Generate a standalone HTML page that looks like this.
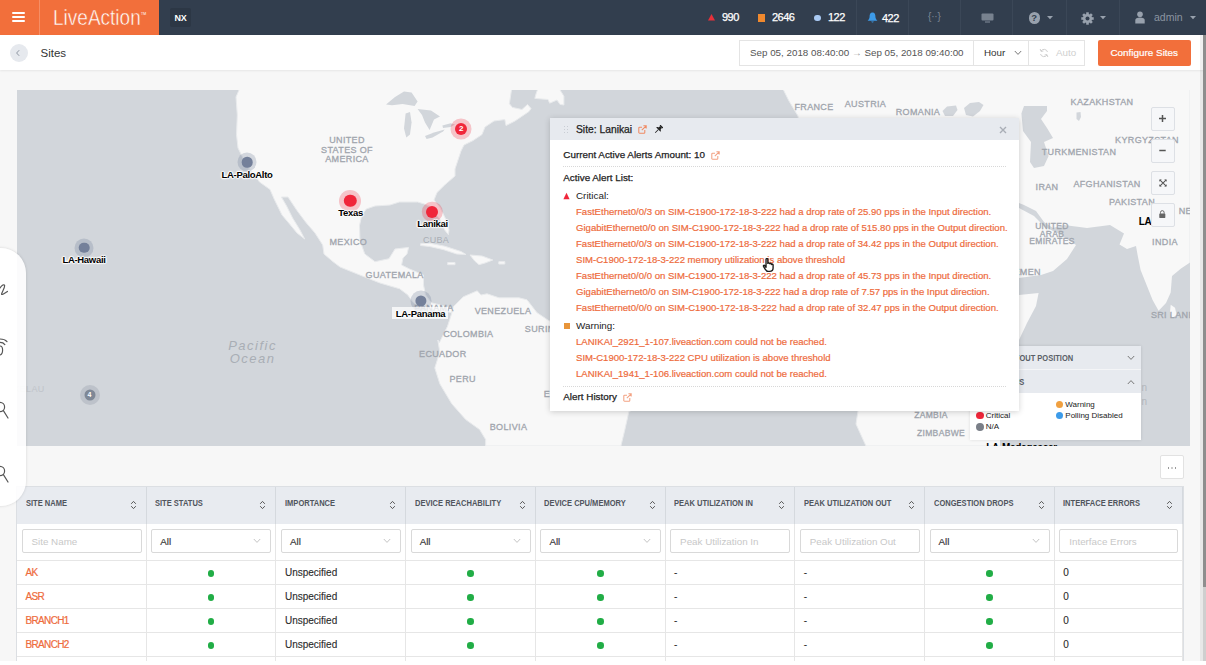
<!DOCTYPE html>
<html><head><meta charset="utf-8">
<style>
*{box-sizing:border-box;margin:0;padding:0}
html,body{width:1206px;height:665px;overflow:hidden;background:#fff;font-family:"Liberation Sans",sans-serif;}
#app{position:absolute;left:0;top:0;width:1206px;height:661px;background:#f7f7f7;overflow:hidden}
.abs{position:absolute}
/* top bar */
#top{position:absolute;left:0;top:0;width:1206px;height:35px;background:#323e4e}
#brand{position:absolute;left:0;top:0;width:159px;height:35px;background:#f26f3b}
#brand .div{position:absolute;left:39px;top:0;width:1px;height:35px;background:#f58e65}
.hb{position:absolute;left:12px;width:13px;height:2px;background:#fff;border-radius:1px}
#logo{position:absolute;left:52.5px;top:4.5px;font-size:22.5px;color:#fff;line-height:26px;font-weight:400;transform-origin:left center;transform:scaleX(.845);-webkit-text-stroke:.5px #f26f3b}
#nx{position:absolute;left:170px;top:8px;width:21px;height:19px;background:#2c3745;border-radius:2px;color:#fff;font-size:9px;letter-spacing:-.3px;font-weight:700;text-align:center;line-height:20.5px}
.tsep{position:absolute;top:0;width:1px;height:35px;background:#3b4757}
.tnum{position:absolute;top:11px;font-size:11px;color:#fff;line-height:13px;letter-spacing:-.55px;-webkit-text-stroke:.25px #fff}
/* sub bar */
#sub{position:absolute;left:0;top:35px;width:1206px;height:35px;background:#fff;box-shadow:0 1px 2px rgba(0,0,0,.07)}
#back{position:absolute;left:10px;top:9px;width:18px;height:18px;border-radius:9px;background:#e6e9ee}
#sites{position:absolute;left:40.5px;top:10px;font-size:11.5px;color:#333;line-height:16px}
.box{position:absolute;top:5px;height:26px;border:1px solid #e4e4e4;background:#fff;font-size:9.8px;color:#555;line-height:24px;white-space:nowrap}
#cfg{position:absolute;left:1097.5px;top:5px;width:93.5px;height:26px;background:#f26f3b;color:#fff;-webkit-text-stroke:.2px #fff;font-size:9.9px;text-align:center;line-height:26px;border-radius:2px}
/* map */
#map{position:absolute;left:17px;top:89.5px;width:1173px;height:356.5px;background:#d2d6db;overflow:hidden}
.cl{position:absolute;font-size:9px;letter-spacing:.35px;color:#a0a5ad;-webkit-text-stroke:.3px #a0a5ad;font-weight:400;white-space:nowrap;transform:translate(-50%,-50%);line-height:9.5px;text-align:center}
.mk{position:absolute;border-radius:50%;transform:translate(-50%,-50%)}
.ml{position:absolute;font-size:9.5px;font-weight:700;color:#000;white-space:nowrap;transform:translate(-50%,-50%);line-height:11px;text-shadow:0 0 2px #fff,0 0 2px #fff,0 0 3px #fff,1px 0 1px #fff,-1px 0 1px #fff,0 1px 1px #fff,0 -1px 1px #fff;letter-spacing:-.3px}
.ctl{position:absolute;left:1133.5px;width:24px;height:24px;background:#f6f7f9;border:1px solid #dde0e5;border-radius:2px}
/* popup */
#pop{position:absolute;left:550px;top:118px;width:469px;height:293px;background:#fff;box-shadow:0 1px 6px rgba(0,0,0,.18)}
#poph{position:absolute;left:0;top:0;width:469px;height:22px;background:#e7eaef}
.pt{position:absolute;font-size:9.85px;color:#222;white-space:nowrap;line-height:12px;-webkit-text-stroke:.25px #222}
.al{position:absolute;left:26px;font-size:9.57px;color:#ee6b3c;white-space:nowrap;line-height:12px;-webkit-text-stroke:.2px #ee6b3c}
.dot{position:absolute;left:13px;width:443px;height:0;border-top:1px dotted #d8d8d8}
/* legend */
#leg{position:absolute;left:970px;top:346px;width:171px;height:94px;background:#fff;box-shadow:0 0 3px rgba(0,0,0,.12)}
.lg{position:absolute;font-size:8px;color:#222;white-space:nowrap;line-height:10px}
.ld{position:absolute;width:7.8px;height:7.8px;border-radius:50%}
/* table */
#tbl{position:absolute;left:16px;top:486.3px;width:1168px;height:180px;background:#fff;border:1px solid #dcdfe3}
.th{position:absolute;top:0;height:36.7px;background:#e8ebf0;border-right:1px solid #d5d9de;font-size:9.6px;font-weight:700;color:#50555d;line-height:32.5px;padding-left:8.5px;white-space:nowrap}
.tht{display:inline-block;transform-origin:left center;transform:scaleX(.785)}
.fc{position:absolute;top:36.7px;height:37px;border-right:1px solid #e6e6e6;border-bottom:1px solid #e6e6e6}
.in{position:absolute;left:4.5px;top:4.7px;right:4px;height:24.3px;border:1px solid #d9d9d9;border-radius:2px;font-size:9.8px;line-height:23.5px;padding-left:9px;color:#c8c8c8;white-space:nowrap}
.in.sel{color:#333;padding-left:8px;-webkit-text-stroke:.15px #333}
.td{position:absolute;height:24px;border-right:1px solid #e6e6e6;border-bottom:1px solid #e6e6e6;font-size:10px;line-height:23px;padding-left:8.5px;color:#2c2c2c;white-space:nowrap;-webkit-text-stroke:.12px #2c2c2c}
.nm{color:#ee6b3c;letter-spacing:-.65px;-webkit-text-stroke:.2px #ee6b3c}
.gd{position:absolute;width:6.4px;height:6.4px;border-radius:50%;background:#21ad46;top:9.3px;left:61.3px}
.so{position:absolute;right:9px;top:13px;width:7px;height:10px}
</style></head><body>
<div id="app">
 <div id="top">
  <div id="brand">
    <div class="hb" style="top:12px"></div><div class="hb" style="top:16px"></div><div class="hb" style="top:20px"></div>
    <div class="div"></div>
    <div id="logo">LiveAction</div><div class="abs" style="left:141px;top:12px;font-size:3.5px;color:#fff;line-height:4px;letter-spacing:.1px">TM</div>
  </div>
  <div id="nx">NX</div>
  <div class="tsep" style="left:856px"></div><div class="tsep" style="left:908px"></div><div class="tsep" style="left:960px"></div><div class="tsep" style="left:1012px"></div><div class="tsep" style="left:1066px"></div><div class="tsep" style="left:1119px"></div><svg class="abs" style="left:707px;top:13px" width="9" height="9" viewBox="0 0 9 9"><path d="M4.5 1 L8 7.5 L1 7.5 Z" fill="#e8303a"/></svg><div class="tnum" style="left:722px">990</div><div class="abs" style="left:757.5px;top:14px;width:7px;height:7.5px;background:#f0892e"></div><div class="tnum" style="left:772px">2646</div><div class="abs" style="left:814.4px;top:14.6px;width:6.4px;height:6.4px;border-radius:50%;background:#a9c9f2"></div><div class="tnum" style="left:828px">122</div><svg class="abs" style="left:867px;top:11.5px" width="11" height="12" viewBox="0 0 11 12"><path d="M5.5 0.6 C3.2 0.6 2.6 2.8 2.6 4.6 C2.6 6.8 1.6 7.8 0.6 8.8 L10.4 8.8 C9.4 7.8 8.4 6.8 8.4 4.6 C8.4 2.8 7.8 0.6 5.5 0.6 Z M4.2 9.6 A1.4 1.4 0 0 0 6.8 9.6 Z" fill="#3d9be9"/></svg><div class="tnum" style="left:882px;top:12px">422</div><div class="abs" style="left:928px;top:10px;font-size:10px;color:#7c8693;letter-spacing:-.2px;line-height:14px">{··}</div><svg class="abs" style="left:981px;top:13px" width="13" height="10" viewBox="0 0 13 10"><rect x="0.5" y="0.5" width="12" height="7" rx="1" fill="#78828f"/><rect x="4" y="8.4" width="5" height="1.2" fill="#78828f"/></svg><div class="abs" style="left:1028.5px;top:12.3px;width:11.5px;height:11.5px;border-radius:50%;background:#98a1ad;color:#323e4e;font-size:9.5px;font-weight:700;text-align:center;line-height:11.5px">?</div><svg class="abs" style="left:1047px;top:16px" width="6" height="4" viewBox="0 0 6 4"><path d="M0 0 L6 0 L3 3.2 Z" fill="#98a1ad"/></svg><svg class="abs" style="left:1081px;top:11.5px" width="13" height="13" viewBox="-6.5 -6.5 13 13"><g fill="#98a1ad"><rect x="-1.3" y="-6.2" width="2.6" height="3" transform="rotate(0)"/><rect x="-1.3" y="-6.2" width="2.6" height="3" transform="rotate(45)"/><rect x="-1.3" y="-6.2" width="2.6" height="3" transform="rotate(90)"/><rect x="-1.3" y="-6.2" width="2.6" height="3" transform="rotate(135)"/><rect x="-1.3" y="-6.2" width="2.6" height="3" transform="rotate(180)"/><rect x="-1.3" y="-6.2" width="2.6" height="3" transform="rotate(225)"/><rect x="-1.3" y="-6.2" width="2.6" height="3" transform="rotate(270)"/><rect x="-1.3" y="-6.2" width="2.6" height="3" transform="rotate(315)"/><circle r="4.6"/></g><circle r="2" fill="#323e4e"/></svg><svg class="abs" style="left:1100px;top:16px" width="6" height="4" viewBox="0 0 6 4"><path d="M0 0 L6 0 L3 3.2 Z" fill="#98a1ad"/></svg><svg class="abs" style="left:1135px;top:11px" width="10" height="13" viewBox="0 0 10 13"><circle cx="5" cy="3.2" r="2.8" fill="#98a1ad"/><path d="M0.3 12.5 L0.3 9 C0.3 7.2 2 6.4 5 6.4 C8 6.4 9.7 7.2 9.7 9 L9.7 12.5 Z" fill="#98a1ad"/></svg><div class="abs" style="left:1154px;top:11px;font-size:10.5px;color:#8b95a1;line-height:13px">admin</div><svg class="abs" style="left:1189.5px;top:16px" width="6" height="4" viewBox="0 0 6 4"><path d="M0 0 L6 0 L3 3.2 Z" fill="#98a1ad"/></svg>
 </div>
 <div id="sub">
  <div id="back"></div>
  <div id="sites">Sites</div>
  <svg class="abs" style="left:15px;top:14px" width="6" height="8" viewBox="0 0 6 8"><path d="M4.2 1.2 L1.6 4 L4.2 6.8" fill="none" stroke="#8e96a2" stroke-width="1"/></svg><div class="box" style="left:739px;width:235px;padding-left:10px"><span id="dt">Sep 05, 2018 08:40:00 <span style="color:#999">→</span> Sep 05, 2018 09:40:00</span></div><div class="box" style="left:973px;width:56px;padding-left:10px;color:#333">Hour<svg class="abs" style="left:40px;top:9px" width="8" height="6" viewBox="0 0 8 6"><path d="M0.8 1 L4 4.4 L7.2 1" fill="none" stroke="#777" stroke-width="1"/></svg></div><div class="box" style="left:1028px;width:57px;color:#cfcfcf;padding-left:27px">Auto<svg class="abs" style="left:10px;top:7px" width="10" height="10" viewBox="0 0 10 10"><path d="M8.5 4 A3.6 3.6 0 0 0 2 3 M1.5 6 A3.6 3.6 0 0 0 8 7" fill="none" stroke="#d0d0d0" stroke-width="1"/><path d="M1.2 1 L2 3.4 L4.4 3" fill="none" stroke="#d0d0d0" stroke-width="1"/><path d="M8.8 9 L8 6.6 L5.6 7" fill="none" stroke="#d0d0d0" stroke-width="1"/></svg></div>
  <div id="cfg">Configure Sites</div>
 </div>
 <div id="map">
 <svg id="mapsvg" class="abs" style="left:0;top:-.5px" width="1173" height="357" viewBox="17 89 1173 357">
<rect x="17" y="89" width="1173" height="357" fill="#d2d6db"/>
<g fill="#f8f8f8" stroke="#e9ebed" stroke-width="1" stroke-linejoin="round">
<!-- North + Central America -->
<path d="M239.5 89 L236 97 L237.3 115 L236.5 134.6 L238 148 L242.5 157 L247 166 L254.6 175 L259.5 182 L270 189.5 L274.6 200 L282 215 L289.6 224 L297 233 L304.7 239 L300 230 L292.6 218 L286.6 206 L281.4 197 L288 197 L297 210.6 L306 222.6 L315 233 L322.7 245 L324 254 L333 261.7 L340 267 L359.8 275 L379.7 282.9 L399.6 288.8 L407.6 294.8 L413.5 302.8 L420 307 L427.5 308.7 L443.4 310.7 L451.3 312.7 L453.3 308.7 L443.4 305.7 L431.4 302.8 L425.5 294.8 L423.5 284.9 L423.5 275 L409.6 269 L401.6 265 L403 258 L407 254 L408.6 247.4 L395 249 L389 258.7 L375 261.7 L364.8 254 L360 240.7 L359.5 225.6 L361.8 215 L366.3 209 L375 206 L390 205 L399.5 202 L417.6 202 L423.6 203.8 L429.6 206 L440 219.6 L444.7 230 L448.4 234.7 L449 230 L446 219.6 L440 207.6 L434 200 L437 192.6 L444.7 185 L455 176 L455 169 L458 160 L461 151 L464 145 L473 140.6 L482 134.6 L485 127 L494 121 L504.8 119.6 L506 125.6 L515 121 L529 111.5 L531 108.5 L527.5 104.5 L522 109.5 L512.4 107.4 L509.4 103.7 L511.6 89 Z"/>
<!-- Newfoundland / Labrador top right -->
<path d="M537.8 89 L559.4 89 L563.9 96.2 L563.9 105 L560 104.4 L557 100 L549.7 103.2 L548 99.5 L534.8 98.4 L536 94 Z"/>
<!-- Cuba -->
<path d="M420.6 243.7 L429.6 243.2 L444.7 246.2 L461 251.5 L466 254.5 L456.7 254 L443 249.5 L429.6 246.5 L420.6 245.5 Z"/>
<!-- Hispaniola -->
<path d="M470 255 L482 256 L492.8 260 L485 263 L479 264.7 L474.7 261 Z"/>
<path d="M498.8 261.7 L504.8 261.7 L504.8 264 L498.8 264 Z"/>
<path d="M447.7 262.5 L455 262.5 L455 264.7 L447.7 264.7 Z"/>
<!-- South America -->
<path d="M453.3 306.7 L463.3 296.8 L477.2 290.8 L481 295 L487 293.8 L499 297.8 L519 297.8 L527 299.8 L537 312.7 L548.9 320.7 L560 325 L700 380 L628.9 411.6 L624.9 429.5 L620.9 446 L485.6 446 L485.6 439.5 L479.6 429.6 L465.7 419.6 L451.7 403.7 L439.8 383.8 L434.8 367.9 L439.8 352 L437.8 340 L439.4 342.6 L447.4 326.6 L451.3 314.7 Z"/>
<!-- Europe / Asia / Africa big block (mostly hidden by popup) -->
<path d="M783 89 L789 101 L798 116 L800 130 L790 200 L800 300 L858 411 L856 424 L866 446 L1190 446 L1190 89 Z"/>
</g>
<!-- water bodies on top of land -->
<g fill="#d2d6db" stroke="none">
<!-- Lake Superior -->
<path d="M386 104.5 L395 97 L404 91.5 L411.6 92.5 L417.6 101.5 L414.6 106 L402.6 104 L392 105.3 Z"/>
<!-- Michigan -->
<path d="M405.6 113.6 L410 112 L411.6 122.6 L410 134.6 L406.3 137.6 L404 128.6 Z"/>
<!-- Huron -->
<path d="M417.6 109 L431 110.6 L440 116.6 L434 119.6 L429.6 130 L425 122.6 L422 115 Z"/>
<!-- Erie -->
<path d="M425 136 L434 132.4 L444.7 129.4 L443 131.6 L432.6 137.6 L426.6 139 Z"/>
<!-- Ontario -->
<path d="M442.4 125.6 L450.7 123.3 L455 124.4 L450.7 127 L443 127.9 Z"/>
<!-- Black sea -->
<path d="M942.5 111 L947 106.5 L956 105.5 L957.5 110 L953 116 L945 116 Z"/><path d="M964 108 L970 103 L979 102 L983.5 105 L980 111 L973 116.5 L966 115 Z"/>
<!-- Caspian -->
<path d="M1024 106 L1047 106 L1047 111 L1041 119 L1047 128 L1053 138 L1044 142 L1048.6 156 L1044 166 L1034 168 L1030 162 L1031 142 L1023 131 L1021.4 113.6 Z"/>
<!-- Aral -->
<path d="M1076.5 112.5 L1080.5 112 L1081 117 L1079 121 L1076.5 119 Z"/>
<!-- Persian gulf + Arabian Sea + Indian Ocean -->
<path d="M1019 203 L1024 205 L1036 211 L1044 222 L1053 228 L1064 225 L1087 228 L1110 225 L1124 233.6 L1119.5 244.5 L1127 249 L1136 246 L1137.6 255 L1140.6 270 L1146.6 285 L1152.6 300 L1158.6 310.7 L1166 303 L1170.7 292.6 L1172 276 L1181 268.6 L1190 262.6 L1190 446 L1000 446 L1000 400 L1019 340 L1027 323 L1036 306 L1038.6 293 L1019 295 L1019 278 L1041 275 L1053 271 L1067 259 L1076 245 L1058.6 233.6 L1053 231 L1044 226 L1034 216 L1019 208 Z"/>
</g>
<!-- Sri Lanka -->
<path d="M1170.7 304.7 L1175 307.7 L1176.7 315 L1172 318 L1170 312 Z" fill="#f8f8f8"/>
</svg>

 <div class="cl" style="left:330px;top:60.5px;">UNITED<br>STATES OF<br>AMERICA</div><div class="cl" style="left:331.3px;top:153.6px;">MEXICO</div><div class="cl" style="left:419px;top:151.3px;-webkit-text-stroke:0;letter-spacing:.3px;color:#a9aeb5">CUBA</div><div class="cl" style="left:377.6px;top:186.5px;">GUATEMALA</div><div class="cl" style="left:486px;top:222.0px;">VENEZUELA</div><div class="cl" style="left:451.3px;top:245.60000000000002px;">COLOMBIA</div><div class="cl" style="left:425.8px;top:265.3px;">ECUADOR</div><div class="cl" style="left:445.7px;top:290.2px;">PERU</div><div class="cl" style="left:491.5px;top:338.2px;">BOLIVIA</div><div class="cl" style="left:417px;top:219.0px;">PANAMA</div><div class="cl" style="left:533px;top:240.0px;">SURINAME</div><div class="cl" style="left:529.9px;top:305.7px;">E</div><div class="cl" style="left:235.6px;top:262.0px;font-style:italic;font-weight:400;font-size:13px;line-height:13.5px;letter-spacing:1.5px;color:#a9aeb5;-webkit-text-stroke:0">Pacific<br>Ocean</div><div class="cl" style="left:5.5px;top:300.7px;color:#c0c4ca;-webkit-text-stroke:0">TOKELAU</div><div class="cl" style="left:797px;top:18.5px;">FRANCE</div><div class="cl" style="left:848.5px;top:15.299999999999997px;">AUSTRIA</div><div class="cl" style="left:901px;top:23.299999999999997px;">ROMANIA</div><div class="cl" style="left:1085px;top:13.900000000000006px;">KAZAKHSTAN</div><div class="cl" style="left:1130px;top:51.20000000000002px;">KYRGYZSTAN</div><div class="cl" style="left:1062px;top:63.900000000000006px;">TURKMENISTAN</div><div class="cl" style="left:1030px;top:98.9px;">IRAN</div><div class="cl" style="left:1090px;top:95.9px;">AFGHANISTAN</div><div class="cl" style="left:1115px;top:113.9px;">PAKISTAN</div><div class="cl" style="left:1035px;top:145.4px;line-height:7.8px;font-size:8.5px">UNITED<br>ARAB<br>EMIRATES</div><div class="cl" style="left:1148px;top:153.9px;">INDIA</div><div class="cl" style="left:1007px;top:183.39999999999998px;">YEMEN</div><div class="cl" style="left:1177px;top:122.6px;">NEPAL</div><div class="cl" style="left:1159px;top:226.59999999999997px;">SRI LANKA</div><div class="cl" style="left:914px;top:326.5px;font-size:8.5px">ZAMBIA</div><div class="cl" style="left:924px;top:344.0px;font-size:8.5px">ZIMBABWE</div><div class="mk" style="left:230px;top:72.9px;width:19.0px;height:19.0px;background:rgba(116,128,154,.28)"></div><div class="mk" style="left:230px;top:72.9px;width:10.6px;height:10.6px;background:#74809a"></div><div class="ml" style="left:230px;top:84.0px;">LA-PaloAlto</div><div class="mk" style="left:67px;top:158.0px;width:19.0px;height:19.0px;background:rgba(116,128,154,.28)"></div><div class="mk" style="left:67px;top:158.0px;width:10.6px;height:10.6px;background:#74809a"></div><div class="ml" style="left:67px;top:169.3px;">LA-Hawaii</div><div class="mk" style="left:403.5px;top:211.7px;width:21.0px;height:21.0px;background:rgba(116,128,154,.28)"></div><div class="mk" style="left:403.5px;top:211.7px;width:11.2px;height:11.2px;background:#74809a"></div><div class="abs" style="left:375px;top:217.8px;width:56px;height:11.5px;background:rgba(255,255,255,.75)"></div><div class="ml" style="left:403.5px;top:223.60000000000002px;">LA-Panama</div><div class="mk" style="left:333.2px;top:111.5px;width:22px;height:22px;background:rgba(240,38,58,.25)"></div><div class="mk" style="left:333.2px;top:111.5px;width:12.4px;height:12.4px;background:#f0263a"></div><div class="ml" style="left:333.5px;top:122.5px;">Texas</div><div class="mk" style="left:415.3px;top:122.30000000000001px;width:20.4px;height:20.4px;background:rgba(240,38,58,.25)"></div><div class="mk" style="left:415.3px;top:122.30000000000001px;width:12px;height:12px;background:#f0263a"></div><div class="ml" style="left:415.6px;top:133.3px;">Lanikai</div><div class="mk" style="left:444.2px;top:39.099999999999994px;width:21.0px;height:21.0px;background:rgba(240,38,58,.25)"></div><div class="mk" style="left:444.2px;top:39.099999999999994px;width:12px;height:12px;background:#f0263a"></div><div class="abs" style="left:439.2px;top:34.099999999999994px;width:10px;height:10px;color:#fff;font-size:8px;font-weight:700;text-align:center;line-height:10px">2</div><div class="mk" style="left:72.5px;top:305.5px;width:20px;height:20px;background:rgba(127,136,150,.25)"></div><div class="mk" style="left:72.5px;top:305.5px;width:11.0px;height:11.0px;background:#7f8896"></div><div class="abs" style="left:67.5px;top:300.5px;width:10px;height:10px;color:#fff;font-size:7px;font-weight:700;text-align:center;line-height:10px">4</div><div class="ml" style="left:1128px;top:131.0px;font-size:10px;text-shadow:none">LA</div><div class="ml" style="left:1004.5px;top:357.8px;text-shadow:none;font-size:10px">LA-Madagascar</div><div class="abs" style="left:1124.5px;top:291.5px;font-size:10px;line-height:13.5px;color:#b3b7bd">n<br>n</div><div class="ctl" style="top:17.0px"><svg class="abs" style="left:7.5px;top:7.5px" width="7" height="7" viewBox="0 0 7 7"><path d="M3.5 0 V7 M0 3.5 H7" stroke="#555" stroke-width="1.5"/></svg></div><div class="ctl" style="top:49.0px"><svg class="abs" style="left:7.5px;top:7.5px" width="7" height="7" viewBox="0 0 7 7"><path d="M0.3 3.5 H6.7" stroke="#555" stroke-width="1.5"/></svg></div><div class="ctl" style="top:81.0px"><svg class="abs" style="left:7px;top:7px" width="8" height="8" viewBox="0 0 10 10"><path d="M1 1 L9 9 M9 1 L1 9" stroke="#555" stroke-width="1.3"/><path d="M0.5 0.5 H3.5 L0.5 3.5 Z M9.5 0.5 V3.5 L6.5 0.5 Z M0.5 9.5 V6.5 L3.5 9.5 Z M9.5 9.5 H6.5 L9.5 6.5 Z" fill="#555"/></svg></div><div class="ctl" style="top:113.0px"><svg class="abs" style="left:7.7px;top:6.5px" width="6.6" height="8.2" viewBox="0 0 8 10"><rect x="0.3" y="4.2" width="7.4" height="5.5" rx=".6" fill="#666"/><path d="M1.8 4.5 V3 A2.2 2.2 0 0 1 6.2 3 V4.5" fill="none" stroke="#666" stroke-width="1.2"/></svg></div><div id="leg" style="left:953px;top:256.5px"><div class="abs" style="left:0;top:0;width:171px;height:23.5px;background:#e7eaef;border-bottom:1px solid #f4f5f7"></div><div class="abs" style="left:0;top:24px;width:171px;height:23px;background:#e7eaef"></div><div class="lg" style="right:68.2px;top:6.5px;font-weight:700;color:#5a5f67;font-size:9.5px;transform-origin:right center;transform:scaleX(.79)">LAYOUT POSITION</div><div class="lg" style="right:117px;top:30.5px;font-weight:700;color:#5a5f67;font-size:9.5px;transform-origin:right center;transform:scaleX(.79)">SITE STATUS</div><svg class="abs" style="left:157px;top:9px" width="8" height="6" viewBox="0 0 8 6"><path d="M0.8 1 L4 4.4 L7.2 1" fill="none" stroke="#777" stroke-width="1"/></svg><svg class="abs" style="left:157px;top:32.5px" width="8" height="6" viewBox="0 0 8 6"><path d="M0.8 5 L4 1.6 L7.2 5" fill="none" stroke="#777" stroke-width="1"/></svg><div class="ld" style="left:85.6px;top:54.6px;background:#f0a040"></div><div class="lg" style="left:95.3px;top:53.7px">Warning</div><div class="ld" style="left:6.1px;top:65.6px;background:#f0263a"></div><div class="lg" style="left:15.8px;top:64.7px">Critical</div><div class="ld" style="left:85.6px;top:65.6px;background:#3d9be9"></div><div class="lg" style="left:95.3px;top:64.7px">Polling Disabled</div><div class="ld" style="left:6.1px;top:77.1px;background:#7a7f88"></div><div class="lg" style="left:15.8px;top:76.2px">N/A</div></div>
 </div>
 <div id="pop"><div id="poph"></div><div class="abs" style="left:13.5px;top:8px;width:1.3px;height:1.3px;background:#c9cdd4"></div><div class="abs" style="left:16.5px;top:8px;width:1.3px;height:1.3px;background:#c9cdd4"></div><div class="abs" style="left:13.5px;top:11px;width:1.3px;height:1.3px;background:#c9cdd4"></div><div class="abs" style="left:16.5px;top:11px;width:1.3px;height:1.3px;background:#c9cdd4"></div><div class="abs" style="left:13.5px;top:14px;width:1.3px;height:1.3px;background:#c9cdd4"></div><div class="abs" style="left:16.5px;top:14px;width:1.3px;height:1.3px;background:#c9cdd4"></div><div class="pt" id="p_site" style="left:26px;top:5.5px;font-size:10.3px">Site: Lanikai</div><svg class="abs" style="left:87.5px;top:6.5px" width="9" height="9" viewBox="0 0 9 9"><path d="M6.8 5 V7.4 A.8 .8 0 0 1 6 8.2 H1.6 A.8 .8 0 0 1 .8 7.4 V3 A.8 .8 0 0 1 1.6 2.2 H4" fill="none" stroke="#f08a63" stroke-width="1.05"/><path d="M5.4 .8 H8.2 V3.6 M8.2 .8 L3.8 5.2" fill="none" stroke="#f08a63" stroke-width="1.05"/></svg><svg class="abs" style="left:103.3px;top:7px" width="10" height="10" viewBox="0 0 10 10"><g transform="translate(5.6,4.4) rotate(45)" fill="#222"><rect x="-2.1" y="-4.6" width="4.2" height="1.1" rx=".4"/><path d="M-1.2 -3.6 L1.2 -3.6 L1.6 -.9 L-1.6 -.9 Z"/><path d="M-3 .3 C-3 -1 -1.8 -1.3 0 -1.3 C1.8 -1.3 3 -1 3 .3 Z"/><rect x="-.45" y=".2" width=".9" height="4.6"/></g></svg><svg class="abs" style="left:449px;top:7.5px" width="8" height="8" viewBox="0 0 8 8"><path d="M1 1 L7 7 M7 1 L1 7" stroke="#a9aeb6" stroke-width="1.4"/></svg><div class="pt" id="p_cur" style="left:13.3px;top:31px">Current Active Alerts Amount: 10</div><svg class="abs" style="left:160.5px;top:32.5px" width="9" height="9" viewBox="0 0 9 9"><path d="M6.8 5 V7.4 A.8 .8 0 0 1 6 8.2 H1.6 A.8 .8 0 0 1 .8 7.4 V3 A.8 .8 0 0 1 1.6 2.2 H4" fill="none" stroke="#f3a283" stroke-width="1.05"/><path d="M5.4 .8 H8.2 V3.6 M8.2 .8 L3.8 5.2" fill="none" stroke="#f3a283" stroke-width="1.05"/></svg><div class="dot" style="top:48px"></div><div class="pt" id="p_aal" style="left:13.3px;top:54px">Active Alert List:</div><svg class="abs" style="left:13px;top:74px" width="7" height="8" viewBox="0 0 7 8"><path d="M3.5 .8 L6.6 7.2 L.4 7.2 Z" fill="#f0263a"/></svg><div class="pt" id="p_crit" style="left:26px;top:71.5px;-webkit-text-stroke:0">Critical:</div><div class="al" id="c0" style="top:87.5px">FastEthernet0/0/3 on SIM-C1900-172-18-3-222 had a drop rate of 25.90 pps in the Input direction.</div><div class="al" id="c1" style="top:103.5px">GigabitEthernet0/0 on SIM-C1900-172-18-3-222 had a drop rate of 515.80 pps in the Output direction.</div><div class="al" id="c2" style="top:119.5px">FastEthernet0/0/3 on SIM-C1900-172-18-3-222 had a drop rate of 34.42 pps in the Output direction.</div><div class="al" id="c3" style="top:135.5px">SIM-C1900-172-18-3-222 memory utilization is above threshold</div><div class="al" id="c4" style="top:151.5px">FastEthernet0/0/0 on SIM-C1900-172-18-3-222 had a drop rate of 45.73 pps in the Input direction.</div><div class="al" id="c5" style="top:167.5px">GigabitEthernet0/0 on SIM-C1900-172-18-3-222 had a drop rate of 7.57 pps in the Input direction.</div><div class="al" id="c6" style="top:183.5px">FastEthernet0/0/0 on SIM-C1900-172-18-3-222 had a drop rate of 32.47 pps in the Output direction.</div><div class="abs" style="left:13.5px;top:204.5px;width:6.5px;height:6.5px;background:#e8953a"></div><div class="pt" id="p_warn" style="left:26px;top:201.5px;-webkit-text-stroke:0">Warning:</div><div class="al" id="w0" style="top:217.7px">LANIKAI_2921_1-107.liveaction.com could not be reached.</div><div class="al" id="w1" style="top:233.7px">SIM-C1900-172-18-3-222 CPU utilization is above threshold</div><div class="al" id="w2" style="top:249.7px">LANIKAI_1941_1-106.liveaction.com could not be reached.</div><div class="dot" style="top:268.3px"></div><div class="pt" id="p_hist" style="left:13.3px;top:273px">Alert History</div><svg class="abs" style="left:73px;top:274.5px" width="9" height="9" viewBox="0 0 9 9"><path d="M6.8 5 V7.4 A.8 .8 0 0 1 6 8.2 H1.6 A.8 .8 0 0 1 .8 7.4 V3 A.8 .8 0 0 1 1.6 2.2 H4" fill="none" stroke="#f3a283" stroke-width="1.05"/><path d="M5.4 .8 H8.2 V3.6 M8.2 .8 L3.8 5.2" fill="none" stroke="#f3a283" stroke-width="1.05"/></svg><svg class="abs" style="left:211.5px;top:140px" width="13.5" height="14.5" viewBox="0 0 14 16"><path d="M4 1.4 C4 .4 6 .4 6 1.4 L6 6 L6.2 6 C6.4 5 8 5.1 8 6.2 L8.3 6.4 C8.5 5.5 10 5.7 10 6.8 L10.3 7.1 C10.6 6.4 11.8 6.6 11.8 7.6 L11.8 11 C11.8 13.2 10.6 14.8 8 14.8 L6.4 14.8 C4.8 14.8 4 13.8 3 12.2 L1.2 9.2 C.8 8.2 2 7.6 2.6 8.4 L4 10.2 Z" fill="#fff" stroke="#1a1a1a" stroke-width="1.5" stroke-linejoin="round"/></svg></div>
 <div class="abs" style="left:1159.5px;top:455px;width:24.5px;height:24px;background:#fff;border:1px solid #e2e2e2;border-radius:2px"><div class="abs" style="left:7px;top:11px;width:1.5px;height:1.5px;background:#999;box-shadow:3.5px 0 0 #999,7px 0 0 #999"></div></div><div id="tbl"><div class="th" style="left:0.0px;width:129.72px"><span class="tht" id="h0">SITE NAME</span><svg class="so" viewBox="0 0 7 10"><path d="M1.2 3.8 L3.5 1.4 L5.8 3.8 M1.2 6.2 L3.5 8.6 L5.8 6.2" fill="none" stroke="#555" stroke-width="1"/></svg></div><div class="fc" style="left:0.0px;width:129.72px"><div class="in">Site Name</div></div><div class="th" style="left:129.72px;width:129.72px"><span class="tht" id="h1">SITE STATUS</span><svg class="so" viewBox="0 0 7 10"><path d="M1.2 3.8 L3.5 1.4 L5.8 3.8 M1.2 6.2 L3.5 8.6 L5.8 6.2" fill="none" stroke="#555" stroke-width="1"/></svg></div><div class="fc" style="left:129.72px;width:129.72px"><div class="in sel">All<svg class="abs" style="right:9px;top:8px" width="8" height="6" viewBox="0 0 8 6"><path d="M0.8 1 L4 4.4 L7.2 1" fill="none" stroke="#c4c4c4" stroke-width="1"/></svg></div></div><div class="th" style="left:259.44px;width:129.72px"><span class="tht" id="h2">IMPORTANCE</span><svg class="so" viewBox="0 0 7 10"><path d="M1.2 3.8 L3.5 1.4 L5.8 3.8 M1.2 6.2 L3.5 8.6 L5.8 6.2" fill="none" stroke="#555" stroke-width="1"/></svg></div><div class="fc" style="left:259.44px;width:129.72px"><div class="in sel">All<svg class="abs" style="right:9px;top:8px" width="8" height="6" viewBox="0 0 8 6"><path d="M0.8 1 L4 4.4 L7.2 1" fill="none" stroke="#c4c4c4" stroke-width="1"/></svg></div></div><div class="th" style="left:389.16px;width:129.72px"><span class="tht" id="h3">DEVICE REACHABILITY</span><svg class="so" viewBox="0 0 7 10"><path d="M1.2 3.8 L3.5 1.4 L5.8 3.8 M1.2 6.2 L3.5 8.6 L5.8 6.2" fill="none" stroke="#555" stroke-width="1"/></svg></div><div class="fc" style="left:389.16px;width:129.72px"><div class="in sel">All<svg class="abs" style="right:9px;top:8px" width="8" height="6" viewBox="0 0 8 6"><path d="M0.8 1 L4 4.4 L7.2 1" fill="none" stroke="#c4c4c4" stroke-width="1"/></svg></div></div><div class="th" style="left:518.88px;width:129.72px"><span class="tht" id="h4">DEVICE CPU/MEMORY</span><svg class="so" viewBox="0 0 7 10"><path d="M1.2 3.8 L3.5 1.4 L5.8 3.8 M1.2 6.2 L3.5 8.6 L5.8 6.2" fill="none" stroke="#555" stroke-width="1"/></svg></div><div class="fc" style="left:518.88px;width:129.72px"><div class="in sel">All<svg class="abs" style="right:9px;top:8px" width="8" height="6" viewBox="0 0 8 6"><path d="M0.8 1 L4 4.4 L7.2 1" fill="none" stroke="#c4c4c4" stroke-width="1"/></svg></div></div><div class="th" style="left:648.6px;width:129.72px"><span class="tht" id="h5">PEAK UTILIZATION IN</span><svg class="so" viewBox="0 0 7 10"><path d="M1.2 3.8 L3.5 1.4 L5.8 3.8 M1.2 6.2 L3.5 8.6 L5.8 6.2" fill="none" stroke="#555" stroke-width="1"/></svg></div><div class="fc" style="left:648.6px;width:129.72px"><div class="in">Peak Utilization In</div></div><div class="th" style="left:778.32px;width:129.72px"><span class="tht" id="h6">PEAK UTILIZATION OUT</span><svg class="so" viewBox="0 0 7 10"><path d="M1.2 3.8 L3.5 1.4 L5.8 3.8 M1.2 6.2 L3.5 8.6 L5.8 6.2" fill="none" stroke="#555" stroke-width="1"/></svg></div><div class="fc" style="left:778.32px;width:129.72px"><div class="in">Peak Utilization Out</div></div><div class="th" style="left:908.04px;width:129.72px"><span class="tht" id="h7">CONGESTION DROPS</span><svg class="so" viewBox="0 0 7 10"><path d="M1.2 3.8 L3.5 1.4 L5.8 3.8 M1.2 6.2 L3.5 8.6 L5.8 6.2" fill="none" stroke="#555" stroke-width="1"/></svg></div><div class="fc" style="left:908.04px;width:129.72px"><div class="in sel">All<svg class="abs" style="right:9px;top:8px" width="8" height="6" viewBox="0 0 8 6"><path d="M0.8 1 L4 4.4 L7.2 1" fill="none" stroke="#c4c4c4" stroke-width="1"/></svg></div></div><div class="th" style="left:1037.76px;width:128.24px"><span class="tht" id="h8">INTERFACE ERRORS</span><svg class="so" viewBox="0 0 7 10"><path d="M1.2 3.8 L3.5 1.4 L5.8 3.8 M1.2 6.2 L3.5 8.6 L5.8 6.2" fill="none" stroke="#555" stroke-width="1"/></svg></div><div class="fc" style="left:1037.76px;width:128.24px"><div class="in">Interface Errors</div></div><div class="td" style="left:0.0px;top:73.7px;width:129.72px"><span class="nm">AK</span></div><div class="td" style="left:129.72px;top:73.7px;width:129.72px"><div class="gd"></div></div><div class="td" style="left:259.44px;top:73.7px;width:129.72px">Unspecified</div><div class="td" style="left:389.16px;top:73.7px;width:129.72px"><div class="gd"></div></div><div class="td" style="left:518.88px;top:73.7px;width:129.72px"><div class="gd"></div></div><div class="td" style="left:648.6px;top:73.7px;width:129.72px">-</div><div class="td" style="left:778.32px;top:73.7px;width:129.72px">-</div><div class="td" style="left:908.04px;top:73.7px;width:129.72px"><div class="gd"></div></div><div class="td" style="left:1037.76px;top:73.7px;width:128.24px">0</div><div class="td" style="left:0.0px;top:97.7px;width:129.72px"><span class="nm">ASR</span></div><div class="td" style="left:129.72px;top:97.7px;width:129.72px"><div class="gd"></div></div><div class="td" style="left:259.44px;top:97.7px;width:129.72px">Unspecified</div><div class="td" style="left:389.16px;top:97.7px;width:129.72px"><div class="gd"></div></div><div class="td" style="left:518.88px;top:97.7px;width:129.72px"><div class="gd"></div></div><div class="td" style="left:648.6px;top:97.7px;width:129.72px">-</div><div class="td" style="left:778.32px;top:97.7px;width:129.72px">-</div><div class="td" style="left:908.04px;top:97.7px;width:129.72px"><div class="gd"></div></div><div class="td" style="left:1037.76px;top:97.7px;width:128.24px">0</div><div class="td" style="left:0.0px;top:121.7px;width:129.72px"><span class="nm">BRANCH1</span></div><div class="td" style="left:129.72px;top:121.7px;width:129.72px"><div class="gd"></div></div><div class="td" style="left:259.44px;top:121.7px;width:129.72px">Unspecified</div><div class="td" style="left:389.16px;top:121.7px;width:129.72px"><div class="gd"></div></div><div class="td" style="left:518.88px;top:121.7px;width:129.72px"><div class="gd"></div></div><div class="td" style="left:648.6px;top:121.7px;width:129.72px">-</div><div class="td" style="left:778.32px;top:121.7px;width:129.72px">-</div><div class="td" style="left:908.04px;top:121.7px;width:129.72px"><div class="gd"></div></div><div class="td" style="left:1037.76px;top:121.7px;width:128.24px">0</div><div class="td" style="left:0.0px;top:145.7px;width:129.72px"><span class="nm">BRANCH2</span></div><div class="td" style="left:129.72px;top:145.7px;width:129.72px"><div class="gd"></div></div><div class="td" style="left:259.44px;top:145.7px;width:129.72px">Unspecified</div><div class="td" style="left:389.16px;top:145.7px;width:129.72px"><div class="gd"></div></div><div class="td" style="left:518.88px;top:145.7px;width:129.72px"><div class="gd"></div></div><div class="td" style="left:648.6px;top:145.7px;width:129.72px">-</div><div class="td" style="left:778.32px;top:145.7px;width:129.72px">-</div><div class="td" style="left:908.04px;top:145.7px;width:129.72px"><div class="gd"></div></div><div class="td" style="left:1037.76px;top:145.7px;width:128.24px">0</div><div class="td" style="left:0.0px;top:169.7px;width:129.72px"><span class="nm">BRANCH3</span></div><div class="td" style="left:129.72px;top:169.7px;width:129.72px"><div class="gd"></div></div><div class="td" style="left:259.44px;top:169.7px;width:129.72px">Unspecified</div><div class="td" style="left:389.16px;top:169.7px;width:129.72px"><div class="gd"></div></div><div class="td" style="left:518.88px;top:169.7px;width:129.72px"><div class="gd"></div></div><div class="td" style="left:648.6px;top:169.7px;width:129.72px">-</div><div class="td" style="left:778.32px;top:169.7px;width:129.72px">-</div><div class="td" style="left:908.04px;top:169.7px;width:129.72px"><div class="gd"></div></div><div class="td" style="left:1037.76px;top:169.7px;width:128.24px">0</div></div>
 <div class="abs" style="left:-30px;top:248px;width:56px;height:258px;border-radius:25px;background:rgba(255,255,255,.9);box-shadow:0 0 3px rgba(0,0,0,.15)"></div><svg class="abs" style="left:0;top:280px" width="12" height="20" viewBox="0 0 12 20"><path d="M0 8 C2 5 4 4 4.6 5.4 C5.2 7 2 12 1.6 14 C1.4 15.4 4 13.6 7.4 11.4" fill="none" stroke="#555" stroke-width="1.2" stroke-linecap="round"/></svg><svg class="abs" style="left:0;top:335px" width="12" height="26" viewBox="0 0 12 26"><path d="M0 4 C3 4 5.6 5 7 6.6 M0 7.4 C2.4 7.4 4 8.4 4.8 9.6 M0 11 C1.6 11 2.6 12.4 2.6 15 C2.6 17.6 1.6 19.6 0 20" fill="none" stroke="#555" stroke-width="1.2" stroke-linecap="round"/></svg><svg class="abs" style="left:0;top:398px" width="12" height="24" viewBox="0 0 12 24"><circle cx="0" cy="9" r="4.6" fill="none" stroke="#555" stroke-width="1.2" stroke-linecap="round"/><path d="M3.4 12.6 L8 20" fill="none" stroke="#555" stroke-width="1.2" stroke-linecap="round" stroke-width="1.5"/></svg><svg class="abs" style="left:0;top:462px" width="12" height="24" viewBox="0 0 12 24"><circle cx="0" cy="9" r="4.6" fill="none" stroke="#555" stroke-width="1.2" stroke-linecap="round"/><path d="M3.4 12.6 L8 20" fill="none" stroke="#555" stroke-width="1.2" stroke-linecap="round" stroke-width="1.5"/></svg>
 <div class="abs" style="left:1200px;top:35px;width:6px;height:626px;background:rgba(0,0,0,.06)"></div>
 <div class="abs" style="left:1203px;top:35px;width:3px;height:552px;background:#8e8e8e"></div>
 <div class="abs" style="left:1203px;top:587px;width:3px;height:74px;background:#cfcfcf"></div>
</div>
</body></html>
